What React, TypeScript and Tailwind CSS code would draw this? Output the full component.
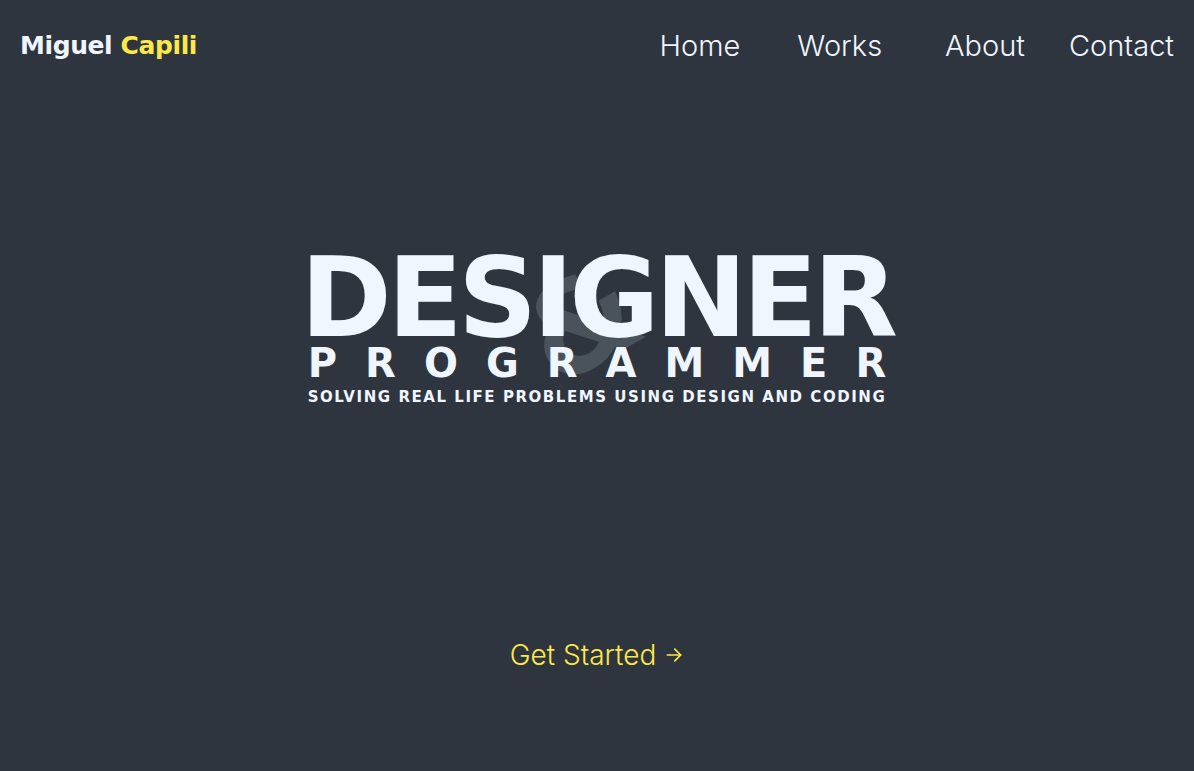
export default function App() {
  return (
    <main
      className="min-h-screen w-full bg-[#2e353e] text-[#f0f6ff] flex flex-col"
      style={{ fontFamily: '"DejaVu Sans", "Noto Sans", sans-serif' }}
    >
      {/* header */}
      <header className="h-[92px] flex items-center justify-between pl-5 pr-5">
        <a className="text-[25px] font-bold tracking-[-0.4px]">
          Miguel <span className="text-[#fde84a]">Capili</span>
        </a>
        <nav className="flex items-center text-[29px] font-light" style={{ fontFamily: 'Inter, "DejaVu Sans", sans-serif' }}>
          <a className="mr-[57px]">Home</a>
          <a className="mr-[63px]">Works</a>
          <a className="mr-[44px]">About</a>
          <a>Contact</a>
        </nav>
      </header>

      {/* hero */}
      <section className="flex flex-col items-center pt-[161px]">
        <div className="relative flex flex-col items-center">
          <span className="absolute left-[226px] top-[8px] text-[125px] font-bold text-[#4a535c] rotate-[-30deg] leading-none select-none">
            &amp;
          </span>
          <h1 className="relative text-[110px] font-bold leading-[90px] tracking-[-4.5px]">DESIGNER</h1>
          <h2 className="relative text-[40px] font-bold leading-[40px] tracking-[28px] mr-[-28px]">PROGRAMMER</h2>
          <p className="relative mt-[3px] text-[15px] font-bold tracking-[1.55px]">
            SOLVING REAL LIFE PROBLEMS USING DESIGN AND CODING
          </p>
        </div>

        <a
          className="mt-[225px] flex items-center gap-2 text-[28px] font-light text-[#fde84a]"
          style={{ fontFamily: 'Inter, "DejaVu Sans", sans-serif' }}
        >
          Get Started
          <svg width="20" height="20" viewBox="0 0 24 24" fill="none" stroke="currentColor" strokeWidth="2" strokeLinecap="round" strokeLinejoin="round">
            <path d="M4 12h16" />
            <path d="M13 5l7 7-7 7" />
          </svg>
        </a>
      </section>
    </main>
  );
}
